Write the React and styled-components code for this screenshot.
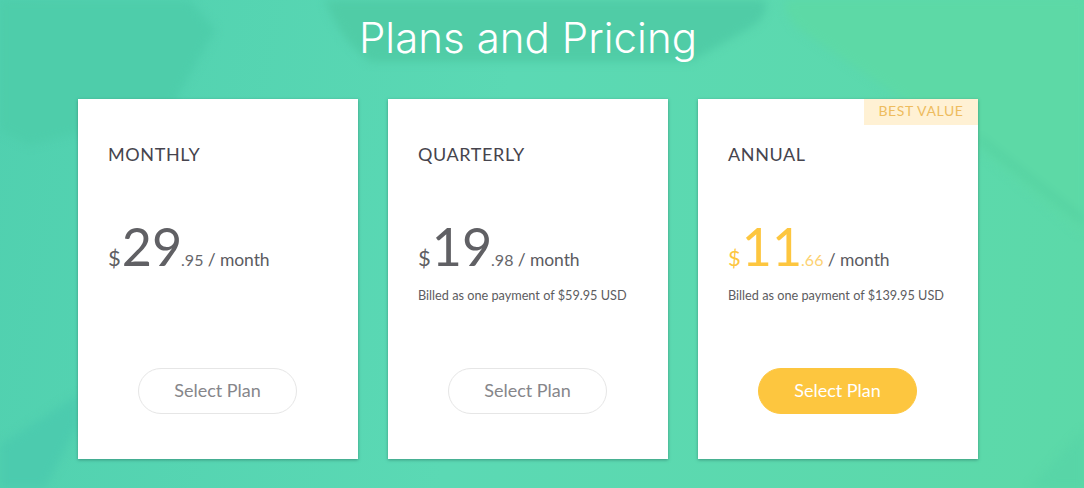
import React from 'react'
import styled, { createGlobalStyle } from 'styled-components'

const plans = [
  { name: 'MONTHLY', whole: '29', cents: '.95' },
  { name: 'QUARTERLY', whole: '19', cents: '.98', billed: 'Billed as one payment of $59.95 USD' },
  { name: 'ANNUAL', whole: '11', cents: '.66', billed: 'Billed as one payment of $139.95 USD', best: true },
]

const Backdrop = () => (
  <BackdropSvg viewBox="0 0 1084 488" preserveAspectRatio="none" aria-hidden="true">
    <path d="M0 0H190L215 30L170 110L30 145L0 130Z" fill="#4ecdaa" />
    <path d="M325 0H765Q770 15 750 28L690 62H370Q340 40 325 0Z" fill="#50cca6" />
    <path d="M785 0H1084V235L980 150L800 30Q785 18 785 0Z" fill="#5dd9a6" />
    <path d="M978 143L1084 226V216L978 133Z" fill="#57d3a3" />
    <path d="M0 445L78 395V425L45 488H0Z" fill="#4ccbae" />
    <path d="M1030 488L1084 430V488Z" fill="#58d5a7" />
  </BackdropSvg>
)

const PlanCard = ({ name, whole, cents, billed, best }) => (
  <Card>
    {best && <Badge>BEST VALUE</Badge>}
    <PlanName>{name}</PlanName>
    <Price>
      <Currency $best={best}>$</Currency>
      <Whole $best={best}>{whole}</Whole>
      <Cents $best={best}>{cents}</Cents>
      <Period> / month</Period>
    </Price>
    <Billed>{billed}</Billed>
    <SelectButton $best={best}>Select Plan</SelectButton>
  </Card>
)

const App = () => {
  return (
    <Page>
      <GlobalStyle />
      <Backdrop />
      <Content>
        <Title>Plans and Pricing</Title>
        <Cards>
          {plans.map((plan) => (
            <PlanCard key={plan.name} {...plan} />
          ))}
        </Cards>
      </Content>
    </Page>
  )
}

const GlobalStyle = createGlobalStyle`
  html, body {
    margin: 0;
    padding: 0;
  }
  body {
    font-family: Lato, "Liberation Sans", sans-serif;
  }
`

const Page = styled.div`
  position: relative;
  width: 1084px;
  height: 488px;
  overflow: hidden;
  background: linear-gradient(100deg, #50d0af 0%, #5bd9b4 45%, #5cd9a8 100%);
`

const BackdropSvg = styled.svg`
  position: absolute;
  inset: 0;
  width: 100%;
  height: 100%;
  filter: blur(4px);
`

const Content = styled.div`
  position: relative;
  width: 900px;
  margin-left: 78px;
  display: flex;
  flex-direction: column;
  align-items: center;
`

const Title = styled.h1`
  margin: 13px 0 0;
  height: 86px;
  font-family: Inter, "Open Sans", sans-serif;
  font-size: 42px;
  line-height: 50px;
  font-weight: 300;
  letter-spacing: 0.05px;
  color: #fff;
`

const Cards = styled.div`
  display: flex;
  gap: 30px;
`

const Card = styled.div`
  position: relative;
  width: 280px;
  height: 360px;
  box-sizing: border-box;
  padding: 44px 30px 0;
  background: #fff;
  box-shadow: 0 1px 3px rgba(40, 110, 95, 0.6);
  display: flex;
  flex-direction: column;
`

const Badge = styled.div`
  position: absolute;
  top: 0;
  right: 0;
  width: 114px;
  height: 26px;
  background: #fff1d4;
  color: #eebc5e;
  font-size: 14px;
  line-height: 24px;
  letter-spacing: 0.6px;
  text-align: center;
`

const PlanName = styled.div`
  font-size: 18px;
  line-height: 22px;
  letter-spacing: 0.6px;
  color: #46444d;
`

const Price = styled.div`
  margin-top: 45px;
  height: 72px;
  display: flex;
  align-items: baseline;
  white-space: pre;
  line-height: 72px;
  color: #5b5b5f;
`

const Currency = styled.span`
  font-size: 22px;
  color: ${(p) => (p.$best ? '#fdc63f' : '#5f5f63')};
`

const Whole = styled.span`
  margin-left: 1px;
  font-size: 52px;
  color: ${(p) => (p.$best ? '#fdc63f' : '#606064')};
`

const Cents = styled.span`
  margin-left: -1px;
  font-size: 16px;
  color: ${(p) => (p.$best ? '#fdd272' : '#66666a')};
`

const Period = styled.span`
  font-size: 17.5px;
  letter-spacing: -0.1px;
`

const Billed = styled.div`
  margin-top: 4px;
  height: 18px;
  font-size: 12.7px;
  line-height: 18px;
  color: #5c5c60;
`

const SelectButton = styled.button`
  align-self: center;
  margin-top: 64px;
  margin-right: 1px;
  width: 159px;
  height: 46px;
  border-radius: 23px;
  border: 1px solid ${(p) => (p.$best ? '#fdc63f' : '#e6e6e6')};
  background: ${(p) => (p.$best ? '#fdc63f' : '#fff')};
  color: ${(p) => (p.$best ? '#fff' : '#86868a')};
  font-family: Lato, sans-serif;
  font-size: 18px;
  padding: 0 0 2px;
`

export default App
